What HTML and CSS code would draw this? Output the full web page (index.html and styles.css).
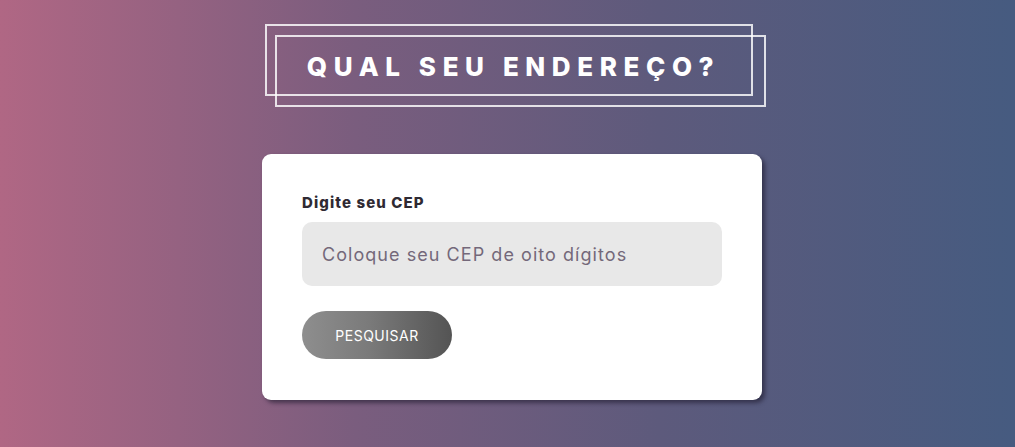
FILE: index.html
```html
<!DOCTYPE html>
<html lang="pt-BR">
<head>
<meta charset="utf-8">
<title>Qual seu endereço?</title>
<link rel="stylesheet" href="styles.css">
</head>
<body>
<main class="page">
  <h1 class="title">QUAL SEU ENDEREÇO?</h1>
  <form class="card">
    <label class="label" for="cep">Digite seu CEP</label>
    <input class="input" id="cep" type="text" placeholder="Coloque seu CEP de oito dígitos">
    <button class="btn" type="button">PESQUISAR</button>
  </form>
</main>
</body>
</html>
```
FILE: styles.css
```css
* { box-sizing: border-box; }
html, body { height: 100%; }
body {
  margin: 0;
  font-family: Inter, "Open Sans", "Liberation Sans", sans-serif;
  background: linear-gradient(90deg, #b06784 0%, #7a5d7e 35%, #5d5a7c 65%, #465b80 100%);
}
.page {
  display: flex;
  flex-direction: column;
  align-items: center;
  padding: 24px 0 0 9px;
}
.title {
  position: relative;
  margin: 0 0 0 -7px;
  width: 488px;
  height: 72px;
  border: 2px solid rgba(255,255,255,0.82);
  display: flex;
  align-items: center;
  justify-content: center;
  color: #fff;
  font-size: 26px;
  font-weight: 800;
  letter-spacing: 6.6px;
  padding: 12px 0 0 10px;
}
.title::after {
  content: "";
  position: absolute;
  left: 8px;
  top: 9px;
  width: 487px;
  height: 68px;
  border: 2px solid rgba(255,255,255,0.82);
}
.card {
  margin-top: 58px;
  width: 500px;
  height: 246px;
  background: #fff;
  border-radius: 9px;
  box-shadow: 3px 3px 4px rgba(30,25,45,0.6);
  padding: 40px 40px;
  display: flex;
  flex-direction: column;
  align-items: flex-start;
}
.label {
  font-size: 15px;
  font-weight: 800;
  color: #2f2a33;
  line-height: 18px;
  letter-spacing: 1.1px;
}
.input {
  margin-top: 10px;
  width: 420px;
  height: 64px;
  border: none;
  border-radius: 10px;
  background: #e8e8e8;
  padding: 0 20px;
  font-family: inherit;
  font-size: 18px;
  letter-spacing: 1.05px;
  color: #444;
  outline: none;
}
.input::placeholder { color: #74687a; }
.btn {
  margin-top: 25px;
  width: 150px;
  height: 48px;
  border: none;
  border-radius: 24px;
  background: linear-gradient(90deg, #8e8e8e 0%, #7a7a7a 45%, #545454 100%);
  color: #fff;
  font-family: inherit;
  font-size: 14px;
  font-weight: 400;
  letter-spacing: 0.5px;
}
```
